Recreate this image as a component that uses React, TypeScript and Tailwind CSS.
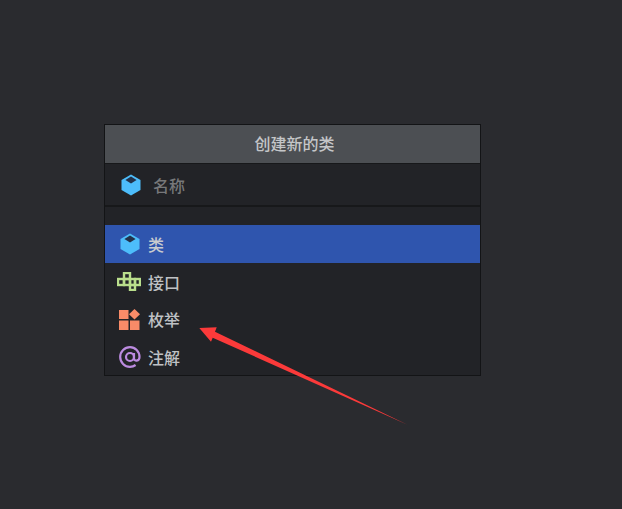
const cjk = "font-['Noto_Sans_CJK_SC','Noto_Sans_CJK_JP',sans-serif]";

function ClassIcon({ className }: { className?: string }) {
  return (
    <svg width="20" height="22" viewBox="0 0 20 22" className={className}>
      <path d="M10 0.5 L19.5 6 V16 L10 21.5 L0.5 16 V6 Z" fill="#4DBDFB" />
      <path d="M10 2.6 L15.6 6 L10 9.4 L4.4 6 Z" fill="#23324a" />
    </svg>
  );
}

function InterfaceIcon({ className }: { className?: string }) {
  return (
    <svg width="24" height="19" viewBox="0 0 24 19" fill="none" stroke="#B9DE8C" strokeWidth="2.4" className={className}>
      <rect x="7" y="1" width="6" height="6" />
      <rect x="1" y="7" width="6" height="6" />
      <rect x="7" y="7" width="6" height="6" />
      <rect x="13" y="7" width="5" height="6" />
      <rect x="18" y="7" width="5" height="6" />
      <rect x="13" y="13" width="5" height="5" />
    </svg>
  );
}

function EnumIcon({ className }: { className?: string }) {
  return (
    <svg width="21" height="21" viewBox="0 0 21 21" fill="#F98B68" className={className}>
      <rect x="0" y="1" width="9.5" height="9" />
      <path d="M15.5 0 L21 5.3 L15.5 10.6 L10 5.3 Z" />
      <rect x="0" y="11.5" width="9.5" height="9.5" />
      <rect x="11" y="11.5" width="9.5" height="9.5" />
    </svg>
  );
}

function AtIcon({ className }: { className?: string }) {
  return (
    <svg width="22" height="22" viewBox="0 0 22 22" fill="none" stroke="#BC8BE0" strokeWidth="2.2" className={className}>
      <circle cx="11" cy="11" r="4" />
      <path d="M15 7 V12.5 C15 15.5 20.5 15.5 20.5 11 C20.5 5.5 16.2 1.2 11 1.2 C5.6 1.2 1.2 5.6 1.2 11 C1.2 16.4 5.6 20.8 11 20.8 C13.2 20.8 15 20.2 16.6 19" />
    </svg>
  );
}

const rows = [
  { label: "类", icon: <ClassIcon className="ml-[1px]" />, selected: true, textClass: "" },
  { label: "接口", icon: <InterfaceIcon className="mb-[1px]" />, textClass: "" },
  { label: "枚举", icon: <EnumIcon className="mb-[2px] ml-[1px]" />, textClass: "mb-[2px]" },
  { label: "注解", icon: <AtIcon className="mb-[3px] ml-[1px]" />, textClass: "mb-[2px]" },
];

export default function App() {
  return (
    <div className={`relative w-[622px] h-[509px] overflow-hidden bg-[#2A2B2F] pt-[124px] pl-[104px] ${cjk}`}>
      <div className="w-[377px] h-[252px] overflow-hidden border border-[#131416] bg-[#222327] flex flex-col">
        <div className="h-[39px] shrink-0 flex items-center justify-center pl-[4px] pb-[2px] bg-[#4C4F53] border-b border-[#17181a] text-[16px] font-medium text-[#C4C6C8]">
          创建新的类
        </div>
        <div className="h-[43px] shrink-0 flex items-center pl-[16px] gap-[12px] border-b-2 border-[#17181a] text-[16px] font-medium text-[#77787A]">
          <ClassIcon />
          <span>名称</span>
        </div>
        <div className="h-[18px] shrink-0" />
        <div className="flex flex-col">
          {rows.map((row) => (
            <div
              key={row.label}
              className={
                row.selected
                  ? "h-[38px] shrink-0 flex items-center bg-[#2F55AE] text-[16px] font-medium text-[#C9CBCE]"
                  : "h-[38px] shrink-0 flex items-center text-[16px] font-medium text-[#BFC1C4]"
              }
            >
              <div className="w-[43px] flex justify-center pl-[5px]">{row.icon}</div>
              <span className={row.textClass}>{row.label}</span>
            </div>
          ))}
        </div>
      </div>
      {/* annotation arrow on top of the dialog */}
      <svg width="622" height="509" viewBox="0 0 622 509" className="absolute left-0 top-0">
        <path
          d="M199.3 328 L216.7 327.3 L215 331.7 L407.5 424.8 L212.7 337.7 L211 341.7 Z"
          fill="#FB3A3A"
        />
      </svg>
    </div>
  );
}
